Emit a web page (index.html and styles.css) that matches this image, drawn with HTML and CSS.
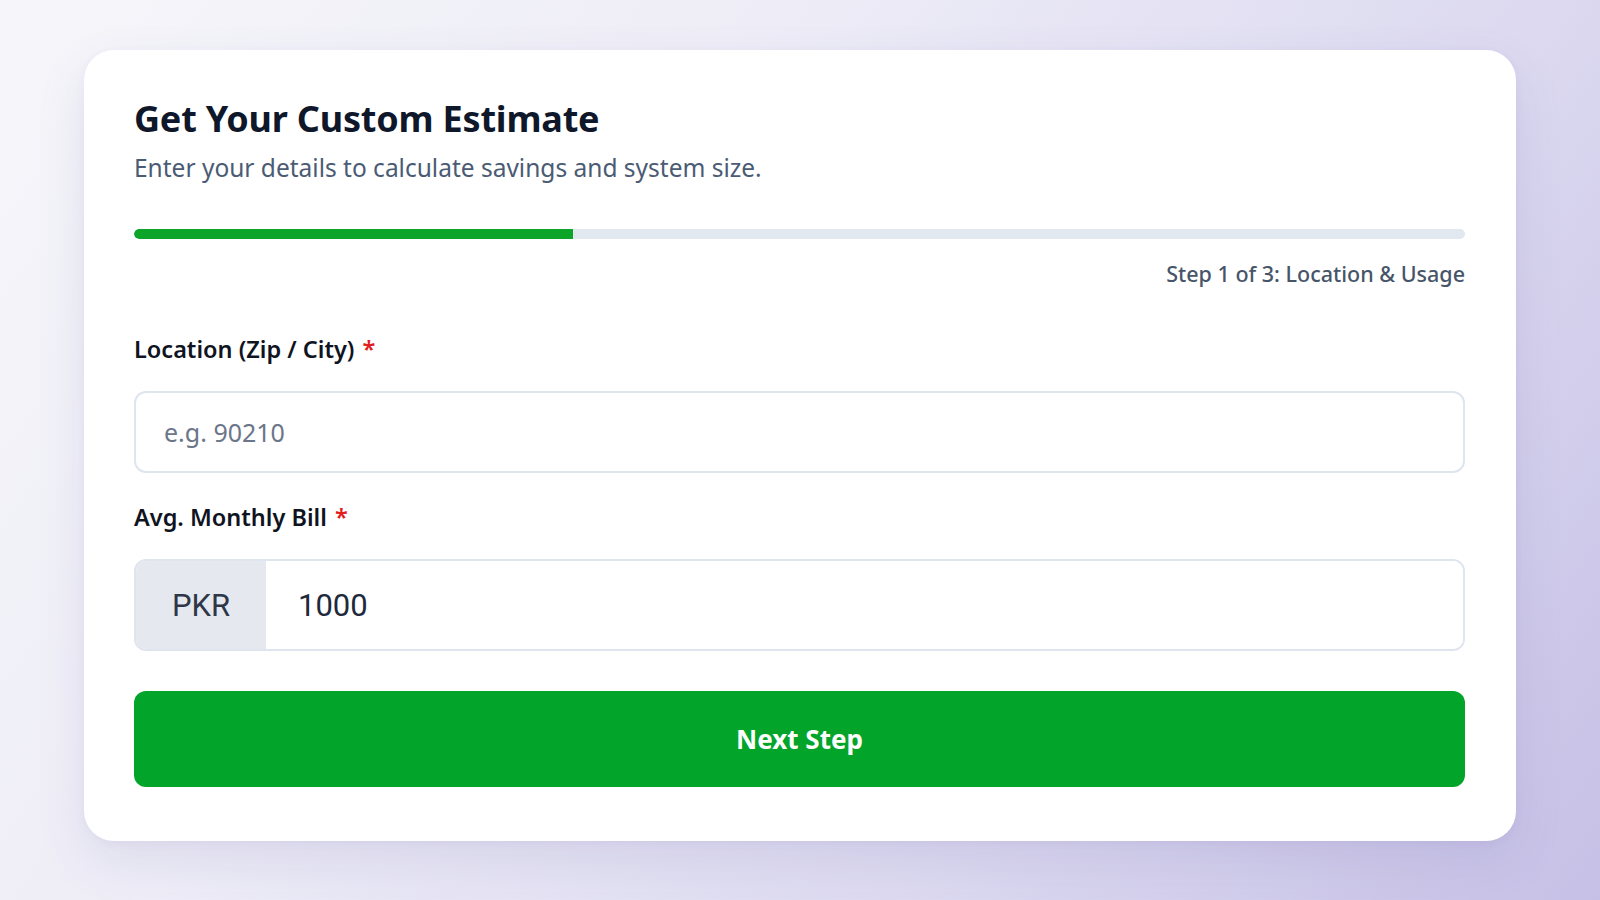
FILE: index.html
```html
<!DOCTYPE html>
<html lang="en">
<head>
<meta charset="utf-8">
<title>Get Your Custom Estimate</title>
<link rel="stylesheet" href="styles.css">
</head>
<body>
<main class="card">
  <h1 class="title">Get Your Custom Estimate</h1>
  <p class="subtitle">Enter your details to calculate savings and system size.</p>
  <div class="progress"><div class="progress-fill" style="width:33%"></div></div>
  <div class="step">Step 1 of 3: Location &amp; Usage</div>
  <form class="form">
    <div class="field">
      <label class="label" for="loc">Location (Zip / City) <span class="req">*</span></label>
      <input class="input" id="loc" type="text" placeholder="e.g. 90210">
    </div>
    <div class="field">
      <label class="label" for="bill">Avg. Monthly Bill <span class="req">*</span></label>
      <div class="group">
        <span class="addon">PKR</span>
        <input class="group-input" id="bill" type="text" value="1000">
      </div>
    </div>
    <button class="btn" type="button">Next Step</button>
  </form>
</main>
</body>
</html>
```
FILE: styles.css
```css
* { box-sizing: border-box; }
html, body { margin: 0; height: 100%; }
body {
  font-family: "Noto Sans", "Open Sans", sans-serif;
  background: linear-gradient(125deg, #f6f6fa 0%, #eeedf7 35%, #dcd9f0 70%, #c6c0e6 100%);
  display: flex;
  justify-content: center;
  align-items: flex-start;
  padding-top: 50px;
}
.card {
  width: 1432px;
  background: #fff;
  border-radius: 30px;
  padding: 44px 51px 54px 50px;
  box-shadow: 0 20px 50px rgba(90, 80, 160, 0.12), 0 2px 8px rgba(90, 80, 160, 0.05);
}
.title {
  margin: 0;
  font-size: 36px;
  line-height: 50px;
  font-weight: 700;
  color: #0f172a;
  letter-spacing: -0.2px;
}
.subtitle {
  margin: 8px 0 0;
  font-size: 24.5px;
  line-height: 32px;
  color: #4b5b74;
}
.progress {
  margin-top: 45px;
  height: 10px;
  border-radius: 5px;
  background: #e2e8f0;
  overflow: hidden;
}
.progress-fill {
  height: 100%;
  background: #0ca52a;
  border-radius: 5px 0 0 5px;
}
.step {
  margin-top: 21px;
  text-align: right;
  font-size: 21.5px;
  line-height: 28px;
  font-weight: 500;
  color: #475569;
}
.form { margin-top: 47px; display: flex; flex-direction: column; }
.field { display: flex; flex-direction: column; gap: 28px; margin-bottom: 30px; }
.label {
  font-size: 23.5px;
  line-height: 28px;
  font-weight: 600;
  color: #0f141f;
}
.req { color: #e11d1d; margin-left: 2px; }
.input {
  height: 82px;
  border: 2px solid #dfe5ee;
  border-radius: 12px;
  padding: 0 28px;
  font-family: "Noto Sans", "Open Sans", sans-serif;
  font-size: 25px;
  color: #1e293b;
  background: #fff;
  outline: none;
}
.input::placeholder { color: #6b7689; }
.group {
  display: flex;
  height: 92px;
  border: 2px solid #dfe5ee;
  border-radius: 12px;
  overflow: hidden;
}
.addon {
  width: 130px;
  display: flex;
  align-items: center;
  justify-content: center;
  background: #e5e8ee;
  font-family: Roboto, "Noto Sans", sans-serif;
  font-size: 31px;
  color: #2d3748;
}
.group-input {
  flex: 1;
  border: none;
  outline: none;
  padding: 0 32px;
  font-family: Roboto, "Noto Sans", sans-serif;
  font-size: 31px;
  color: #1e293b;
  background: #fff;
}
.btn {
  margin-top: 10px;
  height: 96px;
  border: none;
  border-radius: 12px;
  background: #02a52a;
  color: #fff;
  font-family: "Noto Sans", "Open Sans", sans-serif;
  font-size: 26px;
  font-weight: 700;
  cursor: pointer;
}
```
